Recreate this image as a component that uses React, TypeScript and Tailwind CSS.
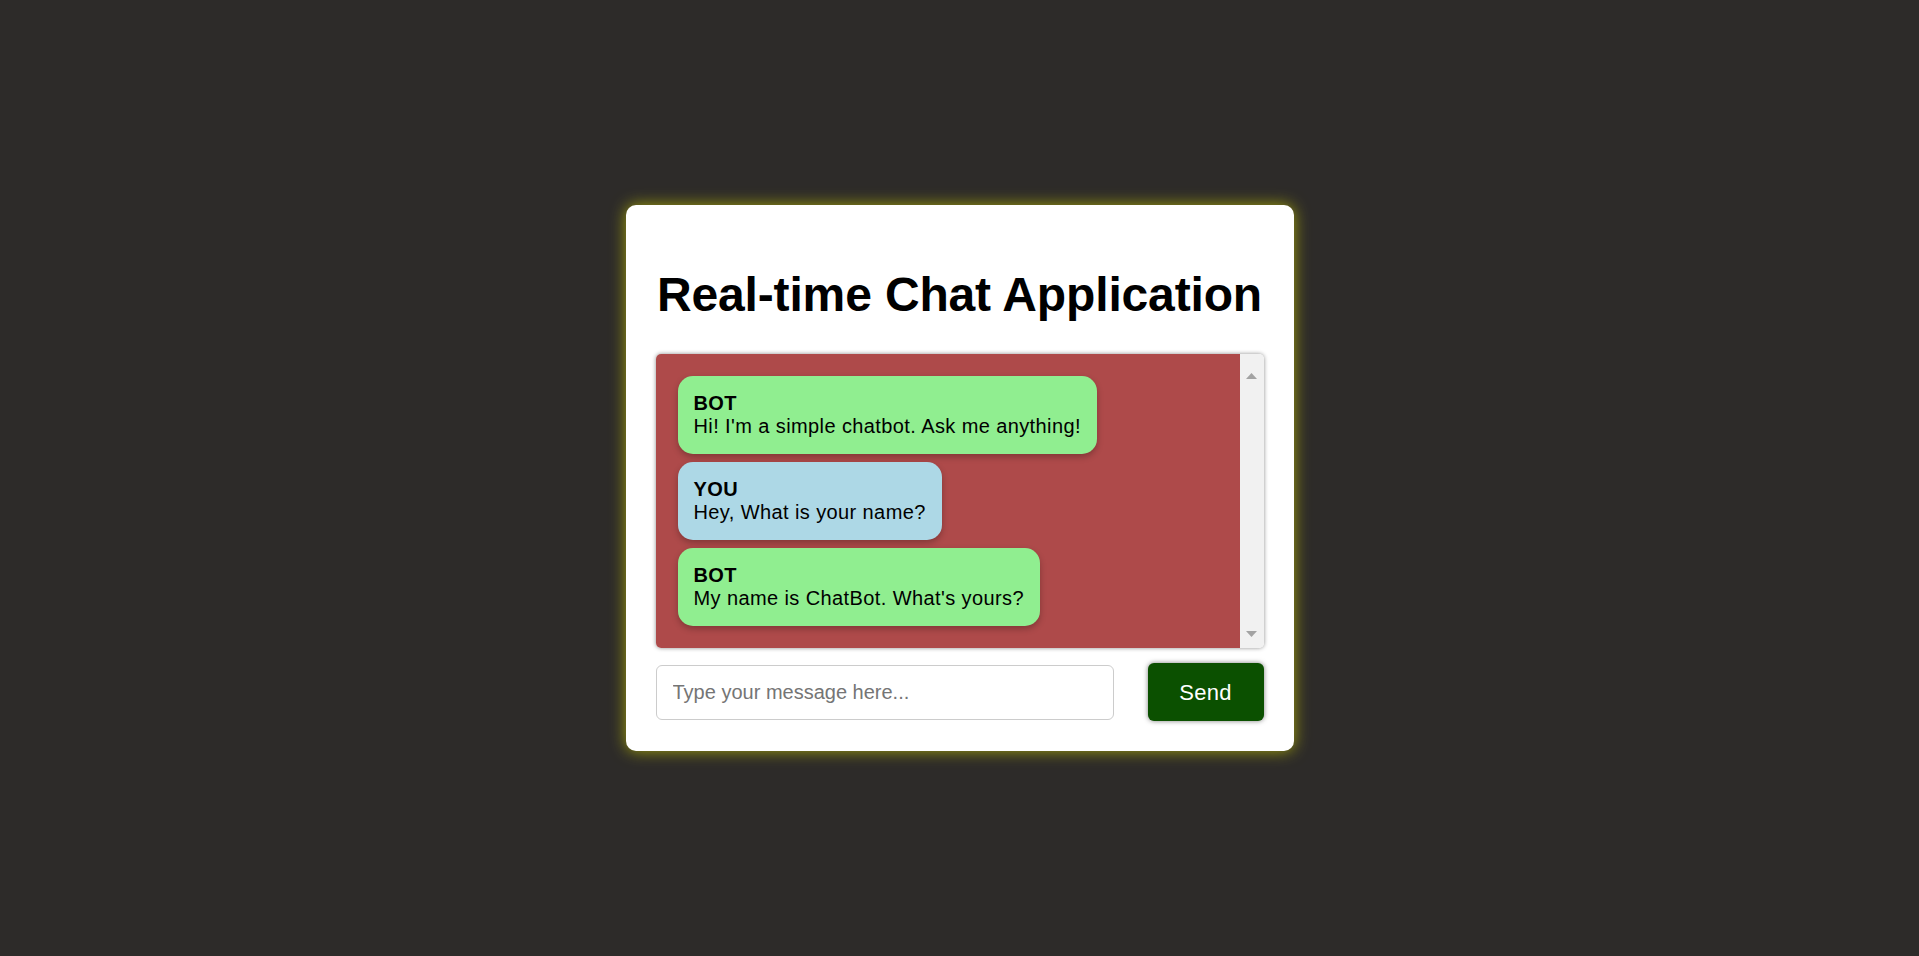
import React from 'react';

type Message = { sender: 'BOT' | 'YOU'; text: string };

const messages: Message[] = [
  { sender: 'BOT', text: "Hi! I'm a simple chatbot. Ask me anything!" },
  { sender: 'YOU', text: 'Hey, What is your name?' },
  { sender: 'BOT', text: "My name is ChatBot. What's yours?" },
];

function Bubble({ sender, text }: Message) {
  return (
    <div
      className={`rounded-[15px] px-[16px] py-[16px] text-[20px] leading-[23px] tracking-[0.4px] text-black shadow-[0_3px_6px_rgba(0,0,0,0.25)] ${
        sender === 'BOT' ? 'bg-[#90ee90]' : 'bg-[#add8e6]'
      }`}
    >
      <div className="font-bold">{sender}</div>
      <div>{text}</div>
    </div>
  );
}

export default function App() {
  return (
    <div
      className="min-h-screen bg-[#2d2b29] flex items-center justify-center"
      style={{ fontFamily: '"Liberation Sans", Arial, sans-serif' }}
    >
      <div className="w-[668px] bg-white rounded-[10px] px-[30px] py-[30px] shadow-[0_0_16px_rgba(200,200,0,0.75)]">
        <h1 className="my-[32px] whitespace-nowrap text-center text-[48px] leading-[55px] tracking-[-0.15px] font-bold text-black">
          Real-time Chat Application
        </h1>

        <div className="flex h-[294px] rounded-[5px] overflow-hidden shadow-[0_0_4px_rgba(0,0,0,0.45)]">
          <div className="flex-1 bg-[#ae4a4a] p-[22px] flex flex-col items-start gap-[8px]">
            {messages.map((m, i) => (
              <Bubble key={i} {...m} />
            ))}
          </div>
          <div className="w-[24px] bg-[#f1f1f1] flex flex-col items-center justify-between pt-[19px] pb-[11px]">
            <svg width="11" height="6" viewBox="0 0 11 6">
              <path d="M5.5 0 L11 6 L0 6 Z" fill="#a3a3a3" />
            </svg>
            <svg width="11" height="6" viewBox="0 0 11 6">
              <path d="M0 0 L11 0 L5.5 6 Z" fill="#a3a3a3" />
            </svg>
          </div>
        </div>

        <div className="mt-[15px] flex items-center justify-between">
          <input
            type="text"
            placeholder="Type your message here..."
            className="w-[458px] h-[55px] rounded-[6px] border border-[#cccccc] px-[16px] text-[20px] text-black placeholder:text-[#757575] outline-none"
          />
          <button className="w-[116px] h-[58px] rounded-[6px] bg-[#0b5000] text-white text-[22px] tracking-[0.3px] shadow-[0_0_5px_rgba(0,0,0,0.5)]">
            Send
          </button>
        </div>
      </div>
    </div>
  );
}
